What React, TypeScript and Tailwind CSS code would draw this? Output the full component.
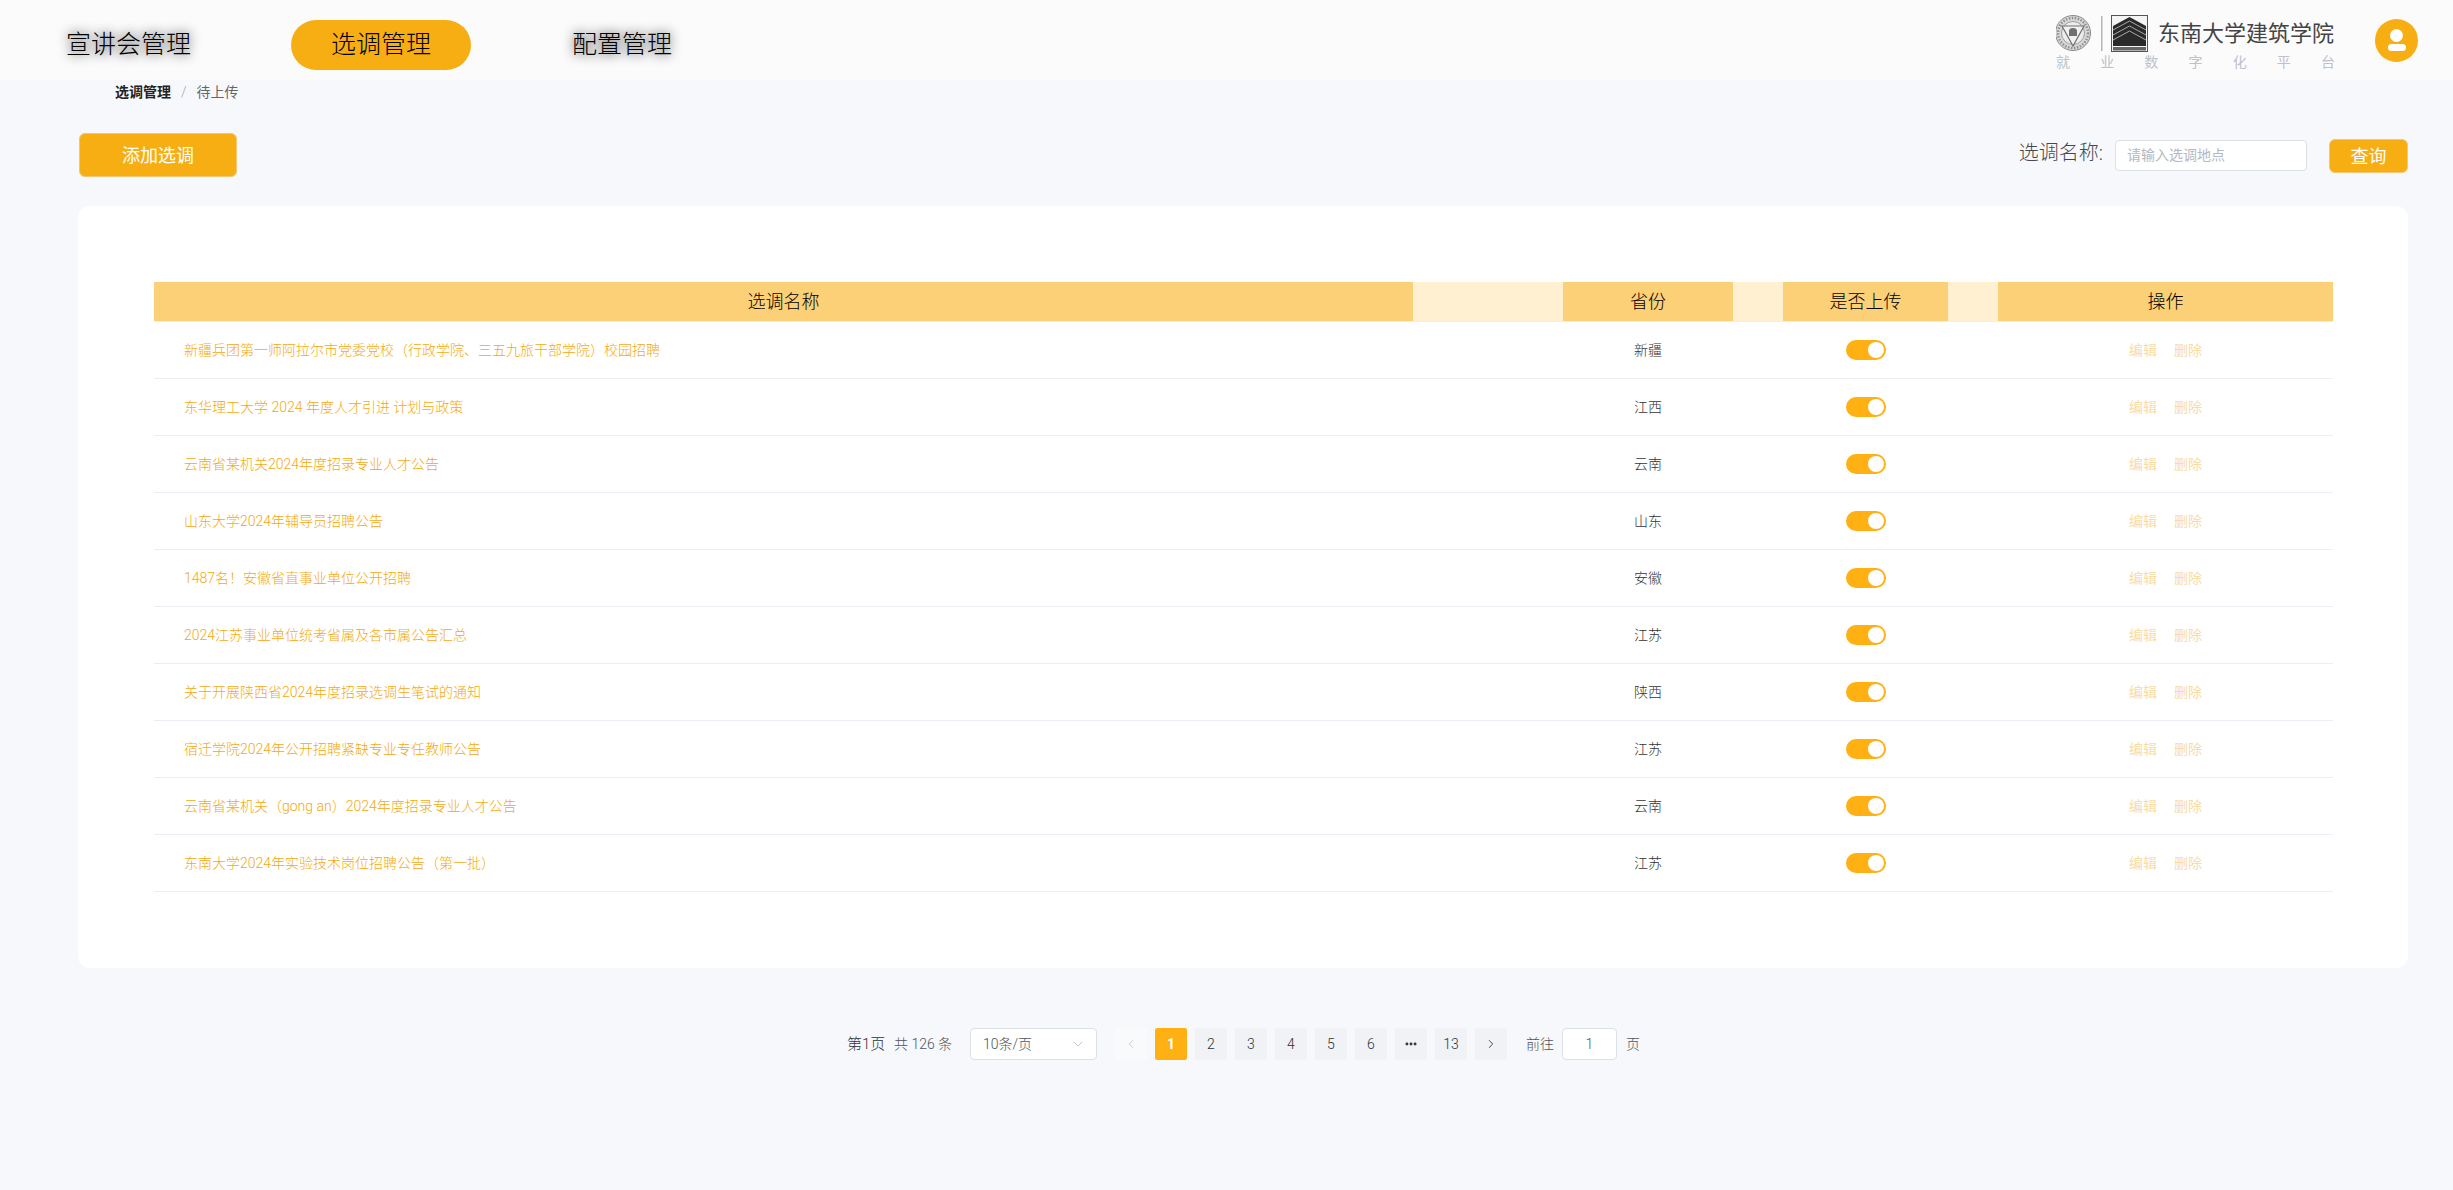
import { ChevronDown, ChevronLeft, ChevronRight, MoreHorizontal } from 'lucide-react'

const rows = [
  { title: '新疆兵团第一师阿拉尔市党委党校（行政学院、三五九旅干部学院）校园招聘', province: '新疆' },
  { title: '东华理工大学 2024 年度人才引进 计划与政策', province: '江西' },
  { title: '云南省某机关2024年度招录专业人才公告', province: '云南' },
  { title: '山东大学2024年辅导员招聘公告', province: '山东' },
  { title: '1487名！安徽省直事业单位公开招聘', province: '安徽' },
  { title: '2024江苏事业单位统考省属及各市属公告汇总', province: '江苏' },
  { title: '关于开展陕西省2024年度招录选调生笔试的通知', province: '陕西' },
  { title: '宿迁学院2024年公开招聘紧缺专业专任教师公告', province: '江苏' },
  { title: '云南省某机关（gong an）2024年度招录专业人才公告', province: '云南' },
  { title: '东南大学2024年实验技术岗位招聘公告（第一批）', province: '江苏' },
]

const pages = ['2', '3', '4', '5', '6']

function SchoolLogo() {
  return (
    <svg width="92" height="38" viewBox="0 0 92 38" className="shrink-0">
      {/* seal */}
      <circle cx="17" cy="18" r="17.5" fill="#d8d8d8" stroke="#8a8a8a" strokeWidth="1" />
      <circle cx="17" cy="18" r="15" fill="none" stroke="#8f8f8f" strokeWidth="2.5" strokeDasharray="1.5 1.5" />
      <circle cx="17" cy="18" r="11.5" fill="#ececec" stroke="#8a8a8a" strokeWidth="0.8" />
      <path d="M6 11 H28 L17 31 Z" fill="#f1f1f1" stroke="#707070" strokeWidth="1.2" />
      <path d="M13 21 V16 a4 3 0 0 1 8 0 V21 Z" fill="#707070" />
      <rect x="45" y="1" width="1.5" height="35" fill="#b5b5b5" />
      {/* building */}
      <rect x="55.5" y="0.5" width="36" height="36" fill="#f4f4f4" stroke="#555" />
      <path d="M57 11 L73.5 2 L90 11 V31 H57 Z" fill="#2a2a2a" />
      <path d="M57 15 L73.5 6 L90 15" fill="none" stroke="#a8a8a8" strokeWidth="1" />
      <path d="M57 20 L73.5 11 L90 20" fill="none" stroke="#a8a8a8" strokeWidth="1" />
      <path d="M57 25 L73.5 16 L90 25" fill="none" stroke="#a8a8a8" strokeWidth="1" />
      <rect x="57" y="32" width="33" height="3.5" fill="#666" />
    </svg>
  )
}

function Toggle() {
  return (
    <div className="flex h-[20px] w-[40px] items-center justify-end rounded-full bg-[#ffb012] pr-[2px]">
      <div className="h-[16px] w-[16px] rounded-full bg-white" />
    </div>
  )
}

function HeaderCell({ label, width, muted }: { label?: string; width: string; muted?: boolean }) {
  return (
    <div className={`${width} ${muted ? 'bg-[#fff0d2]' : 'bg-[#fcd077]'} flex items-center justify-center text-[18px] text-black`}>
      {label}
    </div>
  )
}

export default function App() {
  return (
    <div className="flex h-[1190px] flex-col overflow-hidden bg-[#f7f8fc] font-light font-['Roboto','Liberation_Sans','Noto_Sans_CJK_SC',sans-serif]">
      <header className="flex h-[80px] shrink-0 items-center bg-[#fbfbfc] pl-[66px] pr-[35px]">
        <nav className="mt-[10px] flex items-center text-[25px] text-black [text-shadow:0_0_12px_#666666,0_0_12px_#999999]">
          <span>宣讲会管理</span>
          <span className="ml-[100px] flex h-[50px] w-[180px] items-center justify-center rounded-full bg-[#f7ae13] [text-shadow:none]">选调管理</span>
          <span className="ml-[101px]">配置管理</span>
        </nav>
        <div className="ml-auto flex items-center gap-[40px]">
          <div className="flex w-[279px] flex-col pt-[6px]">
            <div className="flex items-center">
              <SchoolLogo />
              <span className="ml-[10px] whitespace-nowrap text-[22px] font-normal leading-[36px] text-[#444]">东南大学建筑学院</span>
            </div>
            <div className="-mt-[1px] flex justify-between text-[14px] font-normal leading-[20px] text-[#bcc1cc]">
              {['就', '业', '数', '字', '化', '平', '台'].map((ch) => (
                <span key={ch}>{ch}</span>
              ))}
            </div>
          </div>
          <div className="flex h-[43px] w-[43px] flex-col items-center justify-center rounded-full bg-[#f7ae13]">
            <div className="h-[13px] w-[13px] rounded-full bg-white" />
            <div className="mt-[2px] h-[7px] w-[18px] rounded-full bg-white" />
          </div>
        </div>
      </header>

      <div className="flex h-[24px] items-center pl-[115px] text-[14px]">
        <span className="font-bold text-[#222]">选调管理</span>
        <span className="mx-[10px] text-[#a0a4ab]">/</span>
        <span className="font-normal text-[#666]">待上传</span>
      </div>

      <div className="mt-[29px] flex h-[44px] items-center justify-between pl-[79px] pr-[45px]">
        <button className="flex h-[44px] w-[158px] items-center justify-center rounded-[6px] border border-[#f2c674] bg-[#f7ae13] text-[18px] font-normal text-white">添加选调</button>
        <div className="flex items-center">
          <span className="mb-[4px] text-[20px] text-[#45484d]">选调名称:</span>
          <div className="ml-[12px] flex h-[31px] w-[192px] items-center rounded-[4px] border border-[#dcdfe6] bg-white pl-[11px] text-[14px] font-normal text-[#b4b8c0]">请输入选调地点</div>
          <button className="ml-[22px] mt-[2px] flex h-[34px] w-[79px] items-center justify-center rounded-[6px] border border-[#f2c674] bg-[#f7ae13] text-[18px] font-normal text-white">查询</button>
        </div>
      </div>

      <main className="ml-[78px] mr-[45px] mt-[29px] h-[762px] rounded-[12px] bg-white px-[76px] pt-[76px]">
        <div className="flex h-[40px] w-[2179px] border-b border-[#ebeef5]">
          <HeaderCell label="选调名称" width="w-[1259px]" />
          <HeaderCell width="w-[150px]" muted />
          <HeaderCell label="省份" width="w-[170px]" />
          <HeaderCell width="w-[50px]" muted />
          <HeaderCell label="是否上传" width="w-[165px]" />
          <HeaderCell width="w-[50px]" muted />
          <HeaderCell label="操作" width="w-[335px]" />
        </div>
        {rows.map((row) => (
          <div key={row.title} className="flex h-[57px] w-[2179px] items-center border-b border-[#ebeef5] text-[14px]">
            <div className="w-[1409px] pl-[30px] text-[#f4a90f]">{row.title}</div>
            <div className="w-[170px] text-center text-[#333]">{row.province}</div>
            <div className="flex w-[265px] justify-center">
              <Toggle />
            </div>
            <div className="flex w-[335px] justify-center gap-[17px] font-normal text-[#f8dca5]">
              <span>编辑</span>
              <span>删除</span>
            </div>
          </div>
        ))}
      </main>

      <div className="mt-[60px] flex h-[32px] items-center pl-[847px] text-[14px] text-[#50535a]">
        <span className="w-[38px] whitespace-nowrap text-[15px] text-[#303133]">第1页</span>
        <span className="ml-[9px] w-[59px] whitespace-nowrap">共 126 条</span>
        <div className="ml-[17px] flex h-[32px] w-[127px] items-center justify-between rounded-[4px] border border-[#dcdfe6] bg-white pl-[12px] pr-[10px]">
          10条/页
          <ChevronDown size={16} strokeWidth={1.2} className="text-[#b4b8c0]" />
        </div>
        <div className="ml-[18px] flex gap-[8px]">
          <div className="flex h-[32px] w-[32px] items-center justify-center rounded-[2px] bg-[#f9fafc] text-[#c0c4cc]">
            <ChevronLeft size={14} strokeWidth={1.5} />
          </div>
          <div className="flex h-[32px] w-[32px] items-center justify-center rounded-[2px] bg-[#ffb012] font-bold text-white">1</div>
          {pages.map((p) => (
            <div key={p} className="flex h-[32px] w-[32px] items-center justify-center rounded-[2px] bg-[#f0f2f5] text-[#303133]">{p}</div>
          ))}
          <div className="flex h-[32px] w-[32px] items-center justify-center rounded-[2px] bg-[#f0f2f5] text-[#303133]">
            <MoreHorizontal size={14} strokeWidth={3} />
          </div>
          <div className="flex h-[32px] w-[32px] items-center justify-center rounded-[2px] bg-[#f0f2f5] text-[#303133]">13</div>
          <div className="flex h-[32px] w-[32px] items-center justify-center rounded-[2px] bg-[#f0f2f5] text-[#303133]">
            <ChevronRight size={14} strokeWidth={1.5} />
          </div>
        </div>
        <span className="ml-[19px] w-[28px] whitespace-nowrap">前往</span>
        <div className="ml-[8px] flex h-[32px] w-[55px] items-center justify-center rounded-[4px] border border-[#dcdfe6] bg-white">1</div>
        <span className="ml-[9px]">页</span>
      </div>
    </div>
  )
}
